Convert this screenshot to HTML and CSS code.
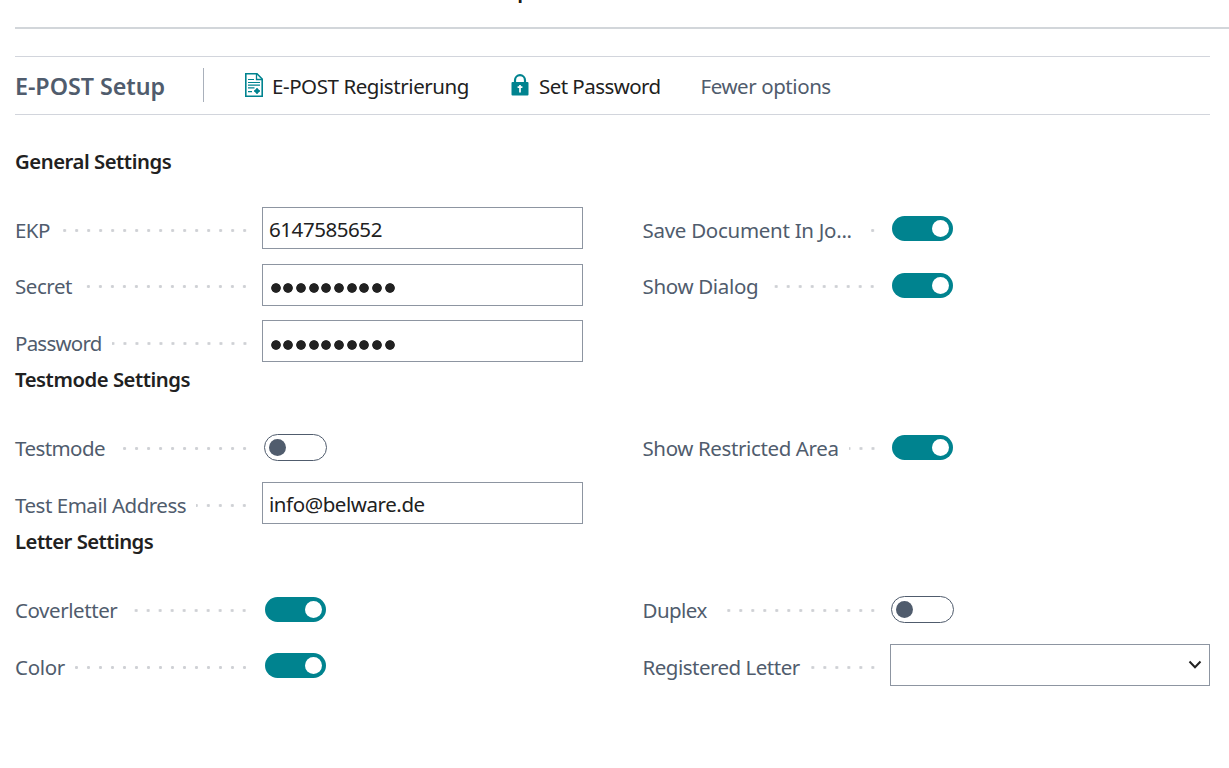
FILE: index.html
```
<!DOCTYPE html>
<html lang="en">
<head>
<meta charset="utf-8">
<title>E-POST Setup</title>
<link rel="stylesheet" href="styles.css">
</head>
<body>
<header class="top"><span class="stem"></span></header>
<main>
<nav class="toolbar">
  <h1 class="title">E-POST Setup</h1>
  <span class="divider"></span>
  <button class="action register">
    <svg width="18" height="24" viewBox="0 0 18 24" fill="none" stroke="#00838f"><path d="M.8.8H12L17.2 6V23.2H.8Z" stroke-width="1.6"/><path d="M11.5 1V6.5H17" stroke-width="1.3"/><path d="M3 6.5H9M3 9.5H15M3 12.2H15M3 14.9H9.5M3 18.7H7" stroke-width="1.2"/><path d="M12 15.2V20.8M9.2 18H14.8" stroke-width="2"/><circle cx="12" cy="18" r="2.2" fill="#00838f" stroke="none"/></svg>
    <span class="reg-text">E-POST Registrierung</span>
  </button>
  <button class="action password">
    <svg width="18" height="22" viewBox="0 0 18 22"><path d="M4 10V6.2a5 5 0 0 1 10 0V10" fill="none" stroke="#00838f" stroke-width="2.2"/><rect x=".5" y="8" width="17" height="13.5" rx="1" fill="#00838f"/><path d="M9 11V18.5M6.6 13.2H11.4" stroke="#fff" stroke-width="1.7"/></svg>
    <span class="pw-text">Set Password</span>
  </button>
  <button class="action fewer"><span>Fewer options</span></button>
</nav>

<section>
  <h2 class="h-general">General Settings</h2>
  <div class="grid">
    <div class="field"><label class="l-ekp">EKP</label><i class="dots"></i><div class="input">6147585652</div></div>
    <div class="field"><label class="l-save">Save Document In Jo...</label><i class="dots"></i><div class="control"><span class="toggle on"></span></div></div>
    <div class="field half"><label class="l-secret">Secret</label><i class="dots"></i><div class="input secret"><b></b><b></b><b></b><b></b><b></b><b></b><b></b><b></b><b></b><b></b></div></div>
    <div class="field half"><label class="l-dialog">Show Dialog</label><i class="dots"></i><div class="control"><span class="toggle on"></span></div></div>
    <div class="field"><label class="l-password">Password</label><i class="dots"></i><div class="input secret"><b></b><b></b><b></b><b></b><b></b><b></b><b></b><b></b><b></b><b></b></div></div>
  </div>
</section>

<section>
  <h2 class="h-test">Testmode Settings</h2>
  <div class="grid">
    <div class="field half"><label class="l-test">Testmode</label><i class="dots"></i><div class="control"><span class="toggle"></span></div></div>
    <div class="field half"><label class="l-area">Show Restricted Area</label><i class="dots"></i><div class="control"><span class="toggle on"></span></div></div>
    <div class="field"><label class="l-email">Test Email Address</label><i class="dots"></i><div class="input mail">info@belware.de</div></div>
  </div>
</section>

<section>
  <h2 class="h-letter">Letter Settings</h2>
  <div class="grid">
    <div class="field half"><label class="l-cover">Coverletter</label><i class="dots"></i><div class="control"><span class="toggle on"></span></div></div>
    <div class="field half"><label class="l-duplex">Duplex</label><i class="dots"></i><div class="control"><span class="toggle"></span></div></div>
    <div class="field"><label class="l-color">Color</label><i class="dots"></i><div class="control"><span class="toggle on"></span></div></div>
    <div class="field"><label class="l-reg">Registered Letter</label><i class="dots"></i><div class="input select"><svg width="14" height="10" viewBox="0 0 14 10"><path d="M1.5 1.5L7 7.3L12.5 1.5" fill="none" stroke="#212121" stroke-width="2"/></svg></div></div>
  </div>
</section>
</main>
</body>
</html>
```
FILE: styles.css
```
* { box-sizing: border-box; }
body { margin: 0; height: 768px; overflow: hidden; background: #fff; color: #212121; font: 20.5px "Noto Sans", sans-serif; letter-spacing: -.43px; }
.top { height: 29px; margin-left: 15px; border-bottom: 2px solid #d2d6da; }
.stem { display: block; width: 4px; height: 3px; margin-left: 503px; background: linear-gradient(90deg, #ffc973 25%, #2b1a1a 25% 75%, #3d8fd0 75%); }
main { padding: 27px 19px 0 15px; }
.toolbar { display: flex; align-items: center; height: 59px; border: solid #d2d5dc; border-width: 1px 0; }
.title { width: 188px; margin: 0; padding-top: 1px; font-size: 23.3px; font-weight: 600; letter-spacing: -.05px; color: #505c6d; white-space: nowrap; }
.divider { width: 1px; height: 34px; margin: 0 41px 2px 0; background: #a9b0bb; }
.action { display: flex; align-items: center; padding: 0; border: 0; background: none; color: inherit; font: inherit; letter-spacing: inherit; white-space: nowrap; }
.action svg { margin-bottom: 2px; }
.register { width: 266px; gap: 9px; }
.password { width: 189.5px; gap: 10px; letter-spacing: -.55px; }
.fewer { color: #505c6d; }
h2 { height: 36px; margin: 0; font-size: 20.3px; line-height: 35.5px; font-weight: 600; letter-spacing: -.46px; }
.h-general { line-height: 34px; }
.h-letter { letter-spacing: -.53px; }
section:first-of-type { padding-top: 28.5px; }
.grid { display: grid; grid-template-columns: 568px 567px; column-gap: 59.5px; row-gap: 14.5px; padding-top: 27.5px; }
.field { display: flex; height: 42px; }
label { color: #505c6d; line-height: 47px; margin-right: 10px; white-space: nowrap; }
.half label { line-height: 45.5px; }
.l-ekp { letter-spacing: -.55px; }
.l-save { margin-right: 12px; letter-spacing: -.28px; }
.l-dialog { letter-spacing: -.33px; }
.l-area { letter-spacing: -.38px; }
.l-password { letter-spacing: -.77px; }
.l-test { letter-spacing: -.57px; }
.l-email { letter-spacing: -.47px; }
.l-color { letter-spacing: -.3px; }
.l-reg, .l-duplex { letter-spacing: -.55px; }
.l-reg { letter-spacing: -.5px; }
.l-duplex { margin-right: 12px; }
.dots { flex: 1; height: 3px; margin: 22px 15px 0 0; background: radial-gradient(circle 1.8px at 1.5px 1.5px, #cfd1d5 70%, transparent 100%) right top / 12px 3px repeat-x; background-position: right -8px top 0; }
.half .dots { margin-top: 21.5px; }
.input { width: 321px; height: 42px; padding-left: 6px; border: 1px solid #8d95a1; line-height: 42px; }
.control { width: 321px; padding: 8px 0 0 2px; }
.field:nth-child(even) { width: 567.5px; }
.field:nth-child(even) .input, .field:nth-child(even) .control { width: 320px; }
.field:nth-child(even) .control { padding-left: 1px; }
.toggle { display: block; width: 63px; height: 27px; padding: 4px; border: 1px solid #505c6d; border-radius: 14px; }
.toggle::before { content: ""; display: block; width: 17px; height: 17px; border-radius: 50%; background: #505c6d; }
.toggle.on { border-color: transparent; background: #00838f; background-clip: padding-box; padding-left: 39.5px; }
.toggle.on::before { background: #fff; }
.secret { display: flex; gap: 1.7px; padding: 18.5px 0 0 7.5px; }
.secret b { width: 11px; height: 11px; background: radial-gradient(circle at 5px 5px, #212121 4.4px, transparent 5.2px); }
.select { display: flex; justify-content: flex-end; padding: 15px 7px 0 0; }
```
